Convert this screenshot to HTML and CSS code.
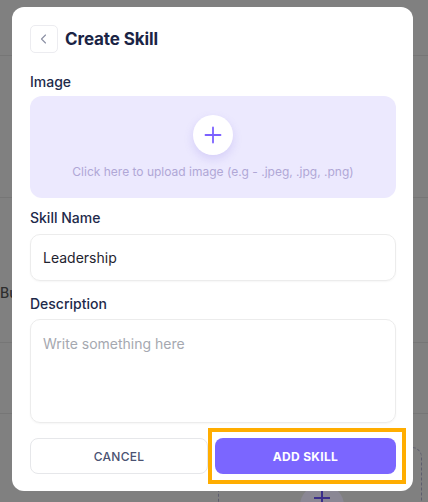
FILE: index.html
```html
<!DOCTYPE html>
<html lang="en">
<head>
<meta charset="utf-8">
<title>Create Skill</title>
<link rel="stylesheet" href="styles.css">
</head>
<body>
<div class="page">
  <div class="bg-line l1"></div>
  <div class="bg-line l2"></div>
  <div class="bg-line l3"></div>
  <div class="bg-line l4"></div>
  <div class="bg-text">Bu</div>
  <div class="bg-card">
    <div class="bg-circle">
      <svg width="20" height="20" viewBox="0 0 20 20"><path d="M10 2 V20 M2 10 H18" stroke="#3a2e8a" stroke-width="2"/></svg>
    </div>
  </div>
</div>

<div class="modal">
  <div class="modal-head">
    <button class="back-btn" aria-label="Back">
      <svg width="12" height="12" viewBox="0 0 12 12"><path d="M7.5 2 L3.5 6 L7.5 10" fill="none" stroke="#8a8fa3" stroke-width="1.1" stroke-linecap="round" stroke-linejoin="round"/></svg>
    </button>
    <h1 class="title">Create Skill</h1>
  </div>

  <div class="field field-image">
    <label class="label">Image</label>
    <div class="upload">
      <div class="plus-circle">
        <svg width="18" height="18" viewBox="0 0 18 18"><path d="M9 1.5 V16.5 M1.5 9 H16.5" stroke="#7b61ff" stroke-width="1.8" stroke-linecap="round"/></svg>
      </div>
      <div class="upload-text">Click here to upload image (e.g - .jpeg, .jpg, .png)</div>
    </div>
  </div>

  <div class="field field-name">
    <label class="label">Skill Name</label>
    <div class="input">Leadership</div>
  </div>

  <div class="field field-desc">
    <label class="label">Description</label>
    <div class="textarea">Write something here</div>
  </div>

  <div class="actions">
    <button class="btn btn-cancel">CANCEL</button>
    <button class="btn btn-add">ADD SKILL</button>
  </div>
</div>
</body>
</html>
```

FILE: styles.css
```css
* { box-sizing: border-box; }
html, body { margin: 0; padding: 0; }
body {
  width: 428px;
  height: 502px;
  overflow: hidden;
  background: #808080;
  font-family: Inter, "Noto Sans", Arial, sans-serif;
  position: relative;
}
.page { position: absolute; inset: 0; }
.bg-line { position: absolute; left: 0; right: 0; height: 1px; background: #767676; }
.l1 { top: 55px; }
.l2 { top: 197px; }
.l3 { top: 342px; }
.l4 { top: 413px; }
.bg-text {
  position: absolute; left: 0; top: 284px;
  font-size: 14px; color: #2e2e2e; font-weight: 500;
}
.bg-card {
  position: absolute; left: 218px; top: 447px; width: 204px; height: 80px;
  border: 1px dashed #5d5d6e; border-radius: 10px;
}
.bg-circle {
  position: absolute; left: 81px; top: 36px; width: 44px; height: 44px;
  border-radius: 50%; background: #8a8794;
  display: flex; justify-content: center; padding-top: 4px;
}

.modal {
  position: absolute;
  left: 12px; top: 7px;
  width: 401px; height: 484px;
  background: #fff;
  border-radius: 12px;
  padding: 18px 17px 0 18px;
  display: flex; flex-direction: column;
}
.modal-head { display: flex; align-items: center; gap: 7px; }
.back-btn {
  width: 28px; height: 28px; padding: 0;
  border: 1px solid #ececf0; border-radius: 5px; background: #fff;
  display: flex; align-items: center; justify-content: center;
}
.title { margin: 0; font-size: 17px; font-weight: 700; color: #1a2445; letter-spacing: -0.1px; }

.field { display: flex; flex-direction: column; }
.label {
  font-size: 14px; font-weight: 500; color: #1e2a4a;
  line-height: 18px; margin: 0 0 6px;
}
.field-image .label { margin-top: 20px; margin-bottom: 5px; }
.field-name .label { margin-top: 11px; margin-bottom: 7px; }
.field-desc .label { margin-top: 14px; margin-bottom: 6px; }
.upload {
  height: 102px; background: #ece9fe; border-radius: 12px;
  display: flex; flex-direction: column; align-items: center;
  padding-top: 19px;
}
.plus-circle {
  width: 40px; height: 40px; border-radius: 50%; background: #fff;
  box-shadow: 0 4px 10px rgba(110, 90, 220, 0.18);
  display: flex; align-items: center; justify-content: center;
}
.upload-text { margin-top: 9px; font-size: 12px; color: #b0a7d6; line-height: 16px; }

.input {
  height: 47px; border: 1px solid #ececec; border-radius: 10px;
  box-shadow: 0 1px 2px rgba(0,0,0,0.04);
  display: flex; align-items: center; padding: 0 12px;
  font-size: 14px; color: #1f2430;
}
.textarea {
  height: 104px; border: 1px solid #ececec; border-radius: 10px;
  box-shadow: 0 1px 2px rgba(0,0,0,0.04);
  padding: 15px 12px; font-size: 14px; color: #a5a8b0; line-height: 18px;
}
.actions { display: flex; gap: 7px; margin-top: 15px; }
.btn {
  height: 36px; border-radius: 8px; font-family: inherit;
  font-size: 12px; letter-spacing: 0.3px; cursor: pointer;
}
.btn-cancel {
  width: 178px; background: #fff; border: 1px solid #e6e7ea;
  color: #4b5372; font-weight: 500;
}
.btn-add {
  flex: 1; background: #7b66ff; border: none; color: #fff; font-weight: 700;
  position: relative;
}
.btn-add::after {
  content: "";
  position: absolute;
  left: -7px; right: -10px; top: -10px; bottom: -10px;
  border: 4px solid #ffad00;
  pointer-events: none;
}
```
